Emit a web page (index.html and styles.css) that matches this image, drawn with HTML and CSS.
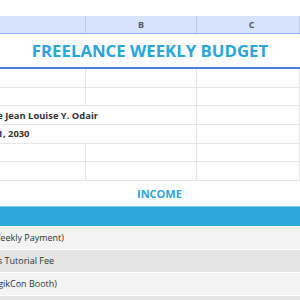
FILE: index.html
```html
<!DOCTYPE html>
<html>
<head>
<meta charset="utf-8">
<link rel="stylesheet" href="styles.css">
</head>
<body>
<div class="sheet">
  <div class="topgap"></div>
  <div class="row colhead">
    <div class="cell"></div>
    <div class="cell">B</div>
    <div class="cell last">C</div>
  </div>
  <div class="title">FREELANCE WEEKLY BUDGET</div>
  <div class="row grid"><div class="cell"></div><div class="cell"></div><div class="cell"></div></div>
  <div class="row grid"><div class="cell"></div><div class="cell"></div><div class="cell"></div></div>
  <div class="row grid merged"><div class="cell wide"><span class="clip end-name"><span class="txt bold">Prepared by Name Jean Louise Y. Odair</span></span></div><div class="cell"></div></div>
  <div class="row grid merged"><div class="cell wide"><span class="clip end-date"><span class="txt bold">January 1, 2030</span></span></div><div class="cell"></div></div>
  <div class="row grid"><div class="cell"></div><div class="cell"></div><div class="cell"></div></div>
  <div class="row grid"><div class="cell"></div><div class="cell"></div><div class="cell"></div></div>
  <div class="section">INCOME</div>
  <div class="band"></div>
  <div class="item light"><span class="clip end-i1"><span class="txt">Salary (Weekly Payment)</span></span></div>
  <div class="item dark"><span class="clip end-i2"><span class="txt">Weekends Tutorial Fee</span></span></div>
  <div class="item light"><span class="clip end-i3"><span class="txt">Sales (MagikCon Booth)</span></span></div>
  <div class="item dark"></div>
</div>
</body>
</html>
```
FILE: styles.css
```css
html, body {
  margin: 0;
  padding: 0;
  background: #ffffff;
}
.sheet {
  width: 300px;
  height: 300px;
  overflow: hidden;
  font-family: "Open Sans", "DejaVu Sans", sans-serif;
  color: #333333;
}
.topgap {
  height: 16px;
}
.row {
  display: grid;
  grid-template-columns: 86px 111px 1fr;
}
.row.merged {
  grid-template-columns: 197px 1fr;
}
.colhead {
  height: 17px;
  background: #d6e3fb;
  border-bottom: 1px solid #8fb0ea;
  font-size: 9px;
  font-weight: 700;
  color: #555a66;
}
.colhead .cell {
  display: flex;
  align-items: center;
  justify-content: center;
  border-right: 1px solid #bccbe3;
}
.colhead .last {
  padding-left: 7px;
}
.title {
  height: 35px;
  border-bottom: 2px solid #4a7fdc;
  display: flex;
  align-items: center;
  justify-content: center;
  font-size: 16.8px;
  font-weight: 700;
  color: #2aa6de;
  padding-bottom: 1px;
  box-sizing: border-box;
}
.grid {
  height: 18.67px;
  border-bottom: 1px solid #e6e6e6;
  box-sizing: border-box;
}
.grid .cell {
  border-right: 1px solid #e6e6e6;
  overflow: hidden;
  white-space: nowrap;
  display: flex;
  align-items: center;
}
.clip {
  display: flex;
  justify-content: flex-end;
  overflow: hidden;
  flex-shrink: 0;
}
.txt {
  white-space: nowrap;
  flex-shrink: 0;
  font-size: 9px;
  color: #333333;
}
.txt.bold {
  font-weight: 700;
  font-size: 9.4px;
}
.end-name {
  width: 98px;
}
.end-date {
  width: 29.5px;
}
.end-i1 {
  width: 64px;
}
.end-i2 {
  width: 54px;
}
.end-i3 {
  width: 57px;
}
.section {
  height: 25px;
  display: flex;
  align-items: center;
  padding-left: 137px;
  font-size: 11px;
  font-weight: 700;
  color: #2aa6de;
  box-sizing: border-box;
}
.band {
  height: 20px;
  background: #2ea8dc;
  border-top: 1px solid #7fcaeb;
  box-sizing: border-box;
}
.item {
  height: 23px;
  display: flex;
  align-items: center;
  overflow: hidden;
  white-space: nowrap;
  border-top: 1px solid #ffffff;
  box-sizing: border-box;
}
.light {
  background: #f3f3f3;
}
.dark {
  background: #e4e4e4;
}
```
